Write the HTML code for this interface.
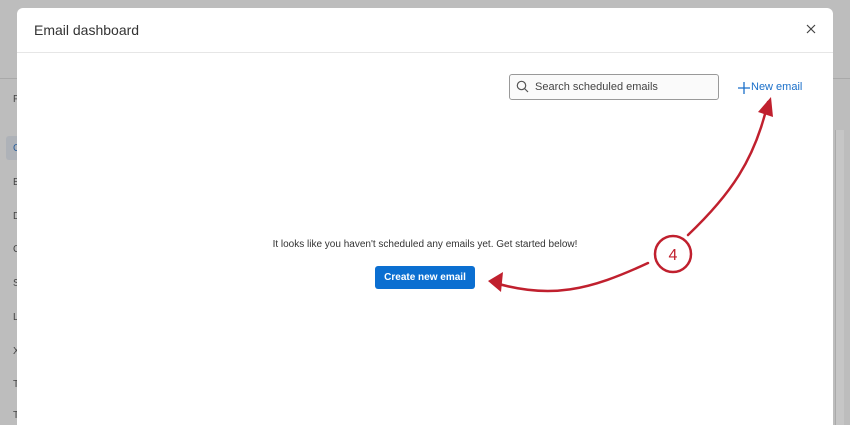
<!DOCTYPE html>
<html><head><style>
html,body{margin:0;width:850px;height:425px;overflow:hidden}
body{background:#bdbdbd;font-family:"Liberation Sans",sans-serif;position:relative}
.bgline{position:absolute;left:0;right:0;height:1px;background:#a9a9a9}
.modal{position:absolute;left:17px;top:8px;width:816px;height:417px;background:#fff;border-radius:6px 6px 0 0}
.hdr{height:44px;border-bottom:1px solid #e6e6e6;position:relative}
.hdr .t{position:absolute;left:17px;top:14px;font-size:14px;color:#333}
.x{position:absolute;right:17px;top:16px}
.search{position:absolute;left:492px;top:66px;width:208px;height:24px;border:1px solid #999;border-radius:3px;background:#fafafa;font-size:11px;color:#444}
.search span{position:absolute;left:25px;top:6px}
.new{position:absolute;left:720px;top:73px;font-size:11px;color:#1a6fc9}
.msg{position:absolute;left:0;width:816px;top:231px;text-align:center;font-size:10px;color:#333}
.btn{position:absolute;left:358px;top:258px;width:100px;height:23px;background:#0b6fd1;border-radius:3px;color:#fff;font-size:10px;font-weight:bold;text-align:center;line-height:23px}
.side{position:absolute;left:13px;font-size:10px;color:#444}
</style></head><body>
<div class="bgline" style="top:78px"></div>
<div style="position:absolute;left:6px;top:136px;width:14px;height:24px;background:#aeb2b8;border-radius:3px"></div>
<div style="position:absolute;left:835px;top:130px;width:8px;height:300px;background:#c6c6c6;border-left:1px solid #aaa"></div>
<div class="side" style="top:94px">F</div>
<div class="side" style="top:143px;color:#2a5e9a">C</div>
<div class="side" style="top:177px">E</div>
<div class="side" style="top:211px">D</div>
<div class="side" style="top:244px">C</div>
<div class="side" style="top:278px">S</div>
<div class="side" style="top:312px">L</div>
<div class="side" style="top:346px">X</div>
<div class="side" style="top:379px">T</div>
<div class="side" style="top:410px">T</div>
<div class="modal">
<div class="hdr"><div class="t">Email dashboard</div><svg class="x" width="10" height="10" viewBox="0 0 10 10"><path d="M1 1L9 9M9 1L1 9" stroke="#444" stroke-width="1.2"/></svg></div>
<div class="search"><svg style="position:absolute;left:6px;top:5px" width="13" height="13" viewBox="0 0 13 13"><circle cx="5.5" cy="5.5" r="4.2" fill="none" stroke="#555" stroke-width="1.2"/><path d="M8.5 8.5L12 12" stroke="#555" stroke-width="1.2"/></svg><span>Search scheduled emails</span></div>
<svg style="position:absolute;left:721px;top:74px" width="12" height="12" viewBox="0 0 12 12"><path d="M6 0V12M0 6H12" stroke="#1a6fc9" stroke-width="1.3"/></svg>
<div class="new" style="left:734px">New email</div>
<div class="msg">It looks like you haven't scheduled any emails yet. Get started below!</div>
<div class="btn">Create new email</div>
</div>
<svg style="position:absolute;left:0;top:0" width="850" height="425">
<g fill="none" stroke="#c0202e" stroke-width="2.5" stroke-linecap="round">
<circle cx="673" cy="254" r="18"/>
<path d="M688 235 C730 195 755 160 768 102"/>
<path d="M648 263 C590 290 550 300 492 282"/>
</g>
<path d="M771 97 L758 112 L773 117 Z" fill="#c0202e"/>
<path d="M488 281 L503 272 L501 292 Z" fill="#c0202e"/>
<text x="673" y="260" text-anchor="middle" font-family="Liberation Sans" font-size="16" fill="#c0202e">4</text>
</svg>
</body></html>
